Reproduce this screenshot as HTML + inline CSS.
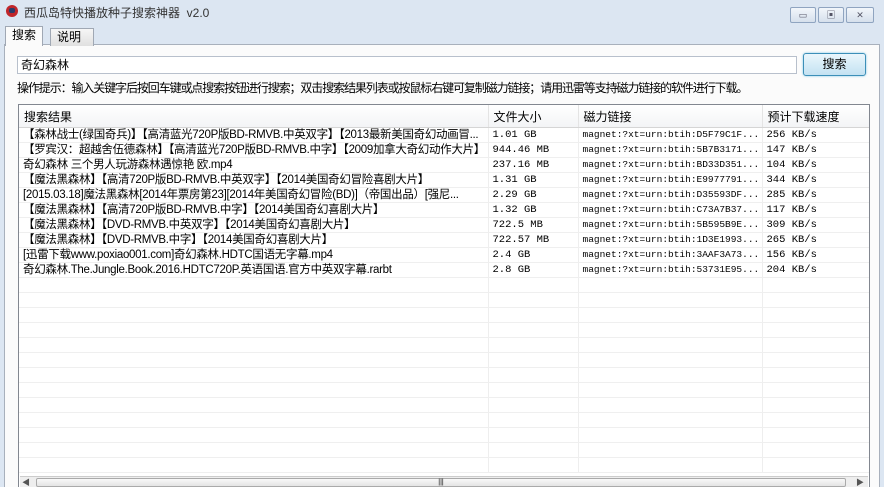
<!DOCTYPE html><html><head><meta charset="utf-8"><style>
html,body{margin:0;width:884px;height:487px;overflow:hidden}
body{background:#dce6f2;font-family:"Liberation Sans","Noto Sans CJK SC",sans-serif;font-size:12px;color:#000;position:relative}
.abs{position:absolute}
.title{left:24px;top:4px;font-size:12px;color:#333}
.icon{left:6px;top:5px;width:12px;height:12px;border-radius:50%;background:#c0262b}
.icon:after{content:"";position:absolute;left:3px;top:3px;width:6px;height:5px;background:#2a3c6a;border-radius:2px}
.wb{top:7px;height:14px;border:1px solid #8fa4c0;border-radius:2px;background:linear-gradient(#f2f6fb,#d6e0ec);font-size:9px;text-align:center;line-height:14px;color:#556}
.tab{top:28px;height:17px;border:1px solid #a0a8b4;border-bottom:none;background:#f0f0f0;line-height:17px;padding:0 6px}
.panel{left:4px;top:44px;width:876px;height:443px;background:#fbfbfb;border:1px solid #a8b0bc;border-bottom:none;box-sizing:border-box}
.inp{left:17px;top:56px;width:780px;height:18px;border:1px solid #b8c0cc;background:#fff;box-sizing:border-box;padding-left:3px;line-height:16px}
.btn{left:803px;top:53px;width:63px;height:23px;border:1px solid #3c8fb8;border-radius:3px;background:linear-gradient(#eaf6fc,#c3e2f2);box-sizing:border-box;text-align:center;line-height:21px;box-shadow:0 0 2px #7cc4e4}
.hint{left:17px;top:79px;letter-spacing:-1.1px;white-space:nowrap}
.list{left:18px;top:104px;width:852px;height:383px;border:1px solid #828790;border-bottom:none;background:#fff;box-sizing:border-box;overflow:hidden}
table{border-collapse:collapse;table-layout:fixed;width:850px}
th{height:20px;font-weight:normal;text-align:left;padding-left:5px;border-right:1px solid #e4e4e4;border-bottom:1px solid #d5d5d5;background:linear-gradient(#fff,#f3f4f6)}
td{height:14px;padding:0 0 0 4px;border-right:1px solid #eee;border-bottom:1px solid #efefef;white-space:nowrap;overflow:hidden;font-size:11.5px;line-height:14px;letter-spacing:-0.3px}
td.m{font-family:"Liberation Mono",monospace;font-size:9.5px;letter-spacing:0}
td.s{font-family:"Liberation Mono",monospace;font-size:10.5px;letter-spacing:0}
.hs{left:20px;top:476px;width:848px;height:11px;background:#eee;border-top:1px solid #ccc}
.thumb{left:36px;top:478px;width:810px;height:9px;border:1px solid #aaa;border-radius:2px;background:linear-gradient(#f8f8f8,#e4e4e4);text-align:center;font-size:7px;line-height:8px;box-sizing:border-box}
</style></head><body>
<div class="abs icon"></div>
<div class="abs title">西瓜岛特快播放种子搜索神器&nbsp; v2.0</div>
<div class="abs wb" style="left:790px;width:24px">▭</div>
<div class="abs wb" style="left:818px;width:24px">▣</div>
<div class="abs wb" style="left:846px;width:26px">✕</div>
<div class="abs panel"></div>
<div class="abs tab" style="left:5px;top:26px;height:19px;background:#fbfbfb;z-index:2">搜索</div>
<div class="abs tab" style="left:50px;width:30px;background:linear-gradient(#f6f6f6,#e0e0e0)">说明</div>
<div class="abs inp">奇幻森林</div>
<div class="abs btn">搜索</div>
<div class="abs hint">操作提示：输入关键字后按回车键或点搜索按钮进行搜索；双击搜索结果列表或按鼠标右键可复制磁力链接；请用迅雷等支持磁力链接的软件进行下载。</div>
<div class="abs list"><table>
<colgroup><col style="width:469px"><col style="width:90px"><col style="width:184px"><col style="width:107px"></colgroup>
<tr><th>搜索结果</th><th>文件大小</th><th>磁力链接</th><th>预计下载速度</th></tr>
<tr><td>【森林战士(绿国奇兵)】【高清蓝光720P版BD-RMVB.中英双字】【2013最新美国奇幻动画冒...</td><td class="s">1.01 GB</td><td class="m">magnet:?xt=urn:btih:D5F79C1F...</td><td class="s">256 KB/s</td></tr>
<tr><td>【罗宾汉：超越舍伍德森林】【高清蓝光720P版BD-RMVB.中字】【2009加拿大奇幻动作大片】</td><td class="s">944.46 MB</td><td class="m">magnet:?xt=urn:btih:5B7B3171...</td><td class="s">147 KB/s</td></tr>
<tr><td>奇幻森林 三个男人玩游森林遇惊艳 欧.mp4</td><td class="s">237.16 MB</td><td class="m">magnet:?xt=urn:btih:BD33D351...</td><td class="s">104 KB/s</td></tr>
<tr><td>【魔法黑森林】【高清720P版BD-RMVB.中英双字】【2014美国奇幻冒险喜剧大片】</td><td class="s">1.31 GB</td><td class="m">magnet:?xt=urn:btih:E9977791...</td><td class="s">344 KB/s</td></tr>
<tr><td>[2015.03.18]魔法黑森林[2014年票房第23][2014年美国奇幻冒险(BD)]（帝国出品）[强尼...</td><td class="s">2.29 GB</td><td class="m">magnet:?xt=urn:btih:D35593DF...</td><td class="s">285 KB/s</td></tr>
<tr><td>【魔法黑森林】【高清720P版BD-RMVB.中字】【2014美国奇幻喜剧大片】</td><td class="s">1.32 GB</td><td class="m">magnet:?xt=urn:btih:C73A7B37...</td><td class="s">117 KB/s</td></tr>
<tr><td>【魔法黑森林】【DVD-RMVB.中英双字】【2014美国奇幻喜剧大片】</td><td class="s">722.5 MB</td><td class="m">magnet:?xt=urn:btih:5B595B9E...</td><td class="s">309 KB/s</td></tr>
<tr><td>【魔法黑森林】【DVD-RMVB.中字】【2014美国奇幻喜剧大片】</td><td class="s">722.57 MB</td><td class="m">magnet:?xt=urn:btih:1D3E1993...</td><td class="s">265 KB/s</td></tr>
<tr><td>[迅雷下载www.poxiao001.com]奇幻森林.HDTC国语无字幕.mp4</td><td class="s">2.4 GB</td><td class="m">magnet:?xt=urn:btih:3AAF3A73...</td><td class="s">156 KB/s</td></tr>
<tr><td>奇幻森林.The.Jungle.Book.2016.HDTC720P.英语国语.官方中英双字幕.rarbt</td><td class="s">2.8 GB</td><td class="m">magnet:?xt=urn:btih:53731E95...</td><td class="s">204 KB/s</td></tr>
<tr><td></td><td></td><td></td><td></td></tr><tr><td></td><td></td><td></td><td></td></tr><tr><td></td><td></td><td></td><td></td></tr><tr><td></td><td></td><td></td><td></td></tr><tr><td></td><td></td><td></td><td></td></tr><tr><td></td><td></td><td></td><td></td></tr><tr><td></td><td></td><td></td><td></td></tr><tr><td></td><td></td><td></td><td></td></tr><tr><td></td><td></td><td></td><td></td></tr><tr><td></td><td></td><td></td><td></td></tr><tr><td></td><td></td><td></td><td></td></tr><tr><td></td><td></td><td></td><td></td></tr><tr><td></td><td></td><td></td><td></td></tr>
</table></div>
<div class="abs hs"></div>
<div class="abs thumb">|||</div>
<div class="abs" style="left:22px;top:477px;font-size:8px;color:#555">◀</div>
<div class="abs" style="left:856px;top:477px;font-size:8px;color:#555">▶</div>
</body></html>
